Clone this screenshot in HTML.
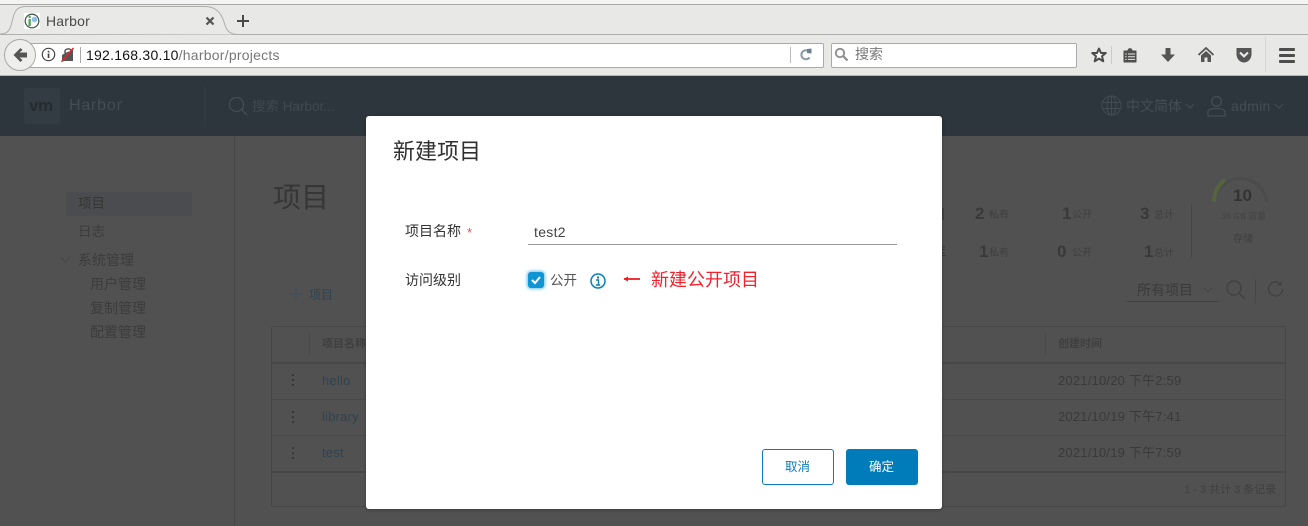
<!DOCTYPE html>
<html><head><meta charset="utf-8"><style>
html,body{margin:0;padding:0}
body{width:1308px;height:526px;overflow:hidden;position:relative;background:#515151;font-family:"Liberation Sans","WenQuanYi Zen Hei","Noto Sans CJK SC",sans-serif}
.a{position:absolute;white-space:nowrap;line-height:1}
.b{position:absolute}
.d{color:#353535}
.m{color:#2f4350}
.n{font-size:17px;color:#393939;font-weight:bold}
.l{font-size:10px;color:#3f3f3f}
</style></head><body>
<!-- browser chrome -->
<div class="b" style="left:0;top:0;width:1308px;height:76px;background:#e8e8e7"></div>
<div class="b" style="left:0;top:0;width:1308px;height:4px;background:#f4f4f2;border-bottom:1px solid #a9a9a6"></div>
<div class="b" style="left:0;top:34px;width:1308px;height:1px;background:#aeaeab"></div>
<div class="b" style="left:0;top:75px;width:1308px;height:1px;background:#b4b4b2"></div>
<svg class="b" style="left:0;top:0" width="240" height="36"><path d="M0 34C8 34 10 30 12 22C14 12 16 6.500 26 6.500H205C215 6.500 221 12 224 22C226 30 229 34.500 238 34.500" fill="#e9e9e8" stroke="#aeaeab" stroke-width="1"/></svg>
<svg class="b" style="left:24px;top:13px" width="16" height="16"><rect width="16" height="16" fill="#fff"/><circle cx="8" cy="8" r="6.800" fill="#fff" stroke="#4a5f58" stroke-width="1.300"/><rect x="4.500" y="6" width="2.300" height="7" fill="#49a84b"/><circle cx="5.600" cy="4" r="1.200" fill="#49a84b"/><circle cx="10.500" cy="6.500" r="2.800" fill="#8cc4e6"/></svg>
<div class="a" style="left:46px;top:14px;font-size:14px;color:#4a4a4a;letter-spacing:.2px">Harbor</div>
<svg class="b" style="left:205px;top:16px" width="10" height="10"><path d="M1.500 1.500L8.500 8.500M8.500 1.500L1.500 8.500" stroke="#555" stroke-width="2.200"/></svg>
<svg class="b" style="left:236px;top:14px" width="14" height="14"><path d="M7 1V13M1 7H13" stroke="#4a4a4a" stroke-width="2"/></svg>
<!-- url bar -->
<div class="b" style="left:20px;top:43px;width:802px;height:23px;background:#fff;border:1px solid #aaa;border-radius:2px"></div>
<div class="b" style="left:4px;top:39px;width:30px;height:30px;background:#eeeeed;border:1px solid #a8a8a6;border-radius:50%"></div>
<svg class="b" style="left:12px;top:47px" width="16" height="16"><path d="M8.500 1L1.500 8L8.500 15L10.500 13L7.500 10.500H15V5.500H7.500L10.500 3Z" fill="#555"/></svg>
<svg class="b" style="left:41px;top:47px" width="15" height="15"><circle cx="7.500" cy="7.500" r="6.200" fill="#fff" stroke="#444" stroke-width="1.200"/><rect x="6.700" y="6.500" width="1.700" height="4.500" fill="#444"/><rect x="6.700" y="3.800" width="1.700" height="1.700" fill="#444"/></svg>
<svg class="b" style="left:60px;top:47px" width="15" height="15"><path d="M2 14V8L5 6L13 3V14Z" fill="#555"/><path d="M5 6V4.500C5 1.500 10.500 1 11 3.500" fill="none" stroke="#555" stroke-width="1.500"/><path d="M1.500 14.800L13.500 1" stroke="#e22" stroke-width="1.500"/></svg>
<div class="b" style="left:80px;top:47px;width:1px;height:16px;background:#aaa"></div>
<div class="a" style="left:86px;top:48px;font-size:14px;color:#111;letter-spacing:.24px">192.168.30.10<span style="color:#777">/harbor/projects</span></div>
<div class="b" style="left:790px;top:47px;width:1px;height:16px;background:#bbb"></div>
<svg class="b" style="left:799px;top:47px" width="14" height="15"><path d="M10.500 10.500A4.500 4.500 0 1 1 10 4.500" fill="none" stroke="#8b9aa6" stroke-width="2"/><path d="M8 2L12.500 1.500V6.500L8 6Z" fill="#6d7f8d"/></svg>
<!-- search -->
<div class="b" style="left:831px;top:43px;width:244px;height:23px;background:#fff;border:1px solid #aaa;border-radius:2px"></div>
<svg class="b" style="left:834px;top:47px" width="15" height="15"><circle cx="6" cy="6" r="4.200" fill="none" stroke="#8b8b8b" stroke-width="1.800"/><path d="M9 9L13.500 13.500" stroke="#8b8b8b" stroke-width="2.200"/></svg>
<div class="a" style="left:855px;top:47px;font-size:14px;color:#777">搜索</div>
<!-- toolbar icons -->
<svg class="b" style="left:1090px;top:46px" width="18" height="18"><path d="M9 2.500L11 7H15.800L12 10.300L13.300 15.300L9 12.600L4.700 15.300L6 10.300L2.200 7H7Z" fill="#f4f4f4" stroke="#4d4d4d" stroke-width="2" stroke-linejoin="round"/></svg>
<div class="b" style="left:1111px;top:46px;width:1px;height:18px;background:#ccc"></div>
<svg class="b" style="left:1122px;top:47px" width="16" height="16"><path d="M2 4H5.500L7 1.800H9L10.500 4H14V15H2Z" fill="#4f4f4f" stroke="#4f4f4f" stroke-linejoin="round"/><path d="M6 7H13M6 9.700H13M6 12.400H13M3.200 7H4.700M3.200 9.700H4.700M3.200 12.400H4.700" stroke="#e8e8e7" stroke-width="1"/></svg>
<svg class="b" style="left:1160px;top:47px" width="16" height="16"><path d="M5.500 1H10.500V7.500H15L8 15L1 7.500H5.500Z" fill="#555"/></svg>
<svg class="b" style="left:1198px;top:47px" width="16" height="16"><path d="M0.500 8L8 1L15.500 8" fill="none" stroke="#555" stroke-width="1.800"/><path d="M3 8.500L8 4L13 8.500V15H9.500V10.500H6.500V15H3Z" fill="#555"/></svg>
<svg class="b" style="left:1235px;top:47px" width="18" height="16"><path d="M1.500 1H16.500V7C16.500 12 13 15.500 9 15.500C5 15.500 1.500 12 1.500 7Z" fill="#555"/><path d="M5 5.500L9 9.300L13 5.500" fill="none" stroke="#e8e8e7" stroke-width="2.200"/></svg>
<div class="b" style="left:1265px;top:37px;width:1px;height:35px;background:#d6d6d5"></div>
<div class="b" style="left:1279px;top:48px;width:16px;height:2.500px;background:#4d4d4d;border-radius:1px"></div>
<div class="b" style="left:1279px;top:54px;width:16px;height:2.500px;background:#4d4d4d;border-radius:1px"></div>
<div class="b" style="left:1279px;top:60px;width:16px;height:2.500px;background:#4d4d4d;border-radius:1px"></div>

<!-- harbor header -->
<div class="b" style="left:0;top:76px;width:1308px;height:60px;background:#2c363c"></div>
<div class="b" style="left:24px;top:88px;width:36px;height:36px;background:#333c42;border-radius:3px"></div>
<div class="a" style="left:29px;top:97px;font-size:17px;font-weight:bold;color:#252c31;letter-spacing:-.5px">vm</div>
<div class="a" style="left:69px;top:98px;font-size:16px;color:#434d53;letter-spacing:.8px">Harbor</div>
<div class="b" style="left:204px;top:86px;width:1px;height:40px;background:#323c42"></div>
<svg class="b" style="left:228px;top:96px" width="20" height="20"><circle cx="8.500" cy="8.500" r="7" fill="none" stroke="#434d53" stroke-width="1.300"/><path d="M13.500 13.500L19 19" stroke="#434d53" stroke-width="1.300"/></svg>
<div class="a" style="left:252px;top:100px;font-size:13.500px;color:#3f494f">搜索 Harbor...</div>
<svg class="b" style="left:1101px;top:95px" width="21" height="21" fill="none" stroke="#414b51"><circle cx="10.500" cy="10.500" r="9.500"/><ellipse cx="10.500" cy="10.500" rx="4.500" ry="9.500"/><path d="M1.500 7.500H19.500M1.500 13.500H19.500M10.500 1V20"/></svg>
<div class="a" style="left:1126px;top:99px;font-size:14px;color:#434d53">中文简体</div>
<svg class="b" style="left:1185px;top:103px" width="10" height="7"><path d="M1 1L5 5L9 1" fill="none" stroke="#434d53"/></svg>
<svg class="b" style="left:1206px;top:95px" width="20" height="22" fill="none" stroke="#434d53" stroke-width="1.300"><circle cx="10.500" cy="6.500" r="4.800"/><path d="M2 21V17C2 14.500 6 13.500 10.500 13.500C15 13.500 19 14.500 19 17V21Z"/></svg>
<div class="a" style="left:1231px;top:99px;font-size:14px;color:#434d53;letter-spacing:.3px">admin</div>
<svg class="b" style="left:1274px;top:103px" width="10" height="7"><path d="M1 1L5 5L9 1" fill="none" stroke="#434d53"/></svg>

<!-- sidebar -->
<div class="b" style="left:234px;top:136px;width:1px;height:390px;background:#474747"></div>
<div class="b" style="left:66px;top:192px;width:126px;height:24px;background:#4a4c4f"></div>
<div class="a d" style="left:78px;top:197px;font-size:13.500px">项目</div>
<div class="a d" style="left:78px;top:225px;font-size:13.500px;color:#3c3c3c">日志</div>
<svg class="b" style="left:60px;top:256px" width="11" height="8"><path d="M1 1L5.500 6L10 1" fill="none" stroke="#454545"/></svg>
<div class="a" style="left:78px;top:253px;font-size:14px;color:#3c3c3c">系统管理</div>
<div class="a" style="left:90px;top:277px;font-size:14px;color:#3c3c3c">用户管理</div>
<div class="a" style="left:90px;top:301px;font-size:14px;color:#3c3c3c">复制管理</div>
<div class="a" style="left:90px;top:325px;font-size:14px;color:#3c3c3c">配置管理</div>

<!-- main -->
<div class="a" style="left:273px;top:184px;font-size:28px;color:#363636">项目</div>
<svg class="b" style="left:290px;top:288px" width="12" height="12"><path d="M6 0V12M0 6H12" stroke="#3c4f5c" stroke-width="1.200"/></svg>
<div class="a m" style="left:309px;top:289px;font-size:12px">项目</div>

<div class="a" style="left:890px;top:207px;font-size:14px;color:#3a3a3a">我的项目</div>
<div class="a" style="left:890px;top:245px;font-size:14px;color:#3a3a3a">镜像仓库</div>
<div class="a n" style="left:975px;top:205px">2</div><div class="a l" style="left:989px;top:211px">私有</div>
<div class="a n" style="left:1062px;top:205px">1</div><div class="a l" style="left:1072px;top:211px">公开</div>
<div class="a n" style="left:1140px;top:205px">3</div><div class="a l" style="left:1154px;top:211px">总计</div>
<div class="a n" style="left:979px;top:243px">1</div><div class="a l" style="left:989px;top:249px">私有</div>
<div class="a n" style="left:1057px;top:243px">0</div><div class="a l" style="left:1072px;top:249px">公开</div>
<div class="a n" style="left:1144px;top:243px">1</div><div class="a l" style="left:1154px;top:249px">总计</div>
<div class="b" style="left:1191px;top:204px;width:1px;height:54px;background:#474747"></div>
<svg class="b" style="left:1208px;top:172px" width="66" height="32" fill="none"><path d="M5.500 30A27 27 0 0 1 59 30" stroke="#4b4b4b" stroke-width="3"/><path d="M5.500 30C6.500 20 10 13 17 8" stroke="#56633f" stroke-width="4"/></svg>
<div class="a" style="left:1233px;top:187px;font-size:17px;color:#333;font-weight:bold">10</div>
<div class="a" style="left:1221px;top:212px;font-size:8.500px;color:#424242;letter-spacing:.2px">36 GB 容量</div>
<div class="a" style="left:1233px;top:235px;font-size:10px;color:#3f3f3f">存储</div>

<div class="a" style="left:1137px;top:283px;font-size:14px;color:#3a3a3a">所有项目</div>
<svg class="b" style="left:1203px;top:287px" width="10" height="7"><path d="M1 1L5 5L9 1" fill="none" stroke="#454545"/></svg>
<div class="b" style="left:1127px;top:301px;width:92px;height:1px;background:#404040"></div>
<svg class="b" style="left:1226px;top:280px" width="20" height="20" fill="none" stroke="#3f3f3f" stroke-width="1.200"><circle cx="8" cy="8" r="7"/><path d="M13 13L19 19"/></svg>
<div class="b" style="left:1255px;top:279px;width:1px;height:24px;background:#474747"></div>
<svg class="b" style="left:1267px;top:281px" width="17" height="17" fill="none" stroke="#3f3f3f" stroke-width="1.100"><path d="M13.500 3A7 7 0 1 0 15.500 8.500"/><path d="M14 0.500V3.800H10.500"/></svg>

<!-- table -->
<div class="b" style="left:271px;top:326px;width:1015px;height:181px;border:1px solid #474747;border-radius:2px;box-sizing:border-box"></div>
<div class="b" style="left:272px;top:362px;width:1014px;height:2px;background:#474747"></div>
<div class="b" style="left:272px;top:399px;width:1014px;height:1px;background:#494949"></div>
<div class="b" style="left:272px;top:435px;width:1014px;height:1px;background:#494949"></div>
<div class="b" style="left:272px;top:471px;width:1014px;height:2px;background:#474747"></div>
<div class="b" style="left:309px;top:333px;width:1px;height:22px;background:#494949"></div>
<div class="b" style="left:1045px;top:333px;width:1px;height:22px;background:#494949"></div>
<div class="a" style="left:322px;top:339px;font-size:11px;font-weight:bold;color:#3f3f3f">项目名称</div>
<div class="a" style="left:1058px;top:339px;font-size:11px;font-weight:bold;color:#3f3f3f">创建时间</div>
<div class="b" style="left:292px;top:374px;width:2px;height:2px;background:#383838;box-shadow:0 5px #383838,0 10px #383838"></div>
<div class="b" style="left:292px;top:411px;width:2px;height:2px;background:#383838;box-shadow:0 5px #383838,0 10px #383838"></div>
<div class="b" style="left:292px;top:447px;width:2px;height:2px;background:#383838;box-shadow:0 5px #383838,0 10px #383838"></div>
<div class="a m" style="left:322px;top:374px;font-size:13px;letter-spacing:.2px">hello</div>
<div class="a m" style="left:322px;top:410px;font-size:13px;letter-spacing:.2px">library</div>
<div class="a m" style="left:322px;top:446px;font-size:13px;letter-spacing:.2px">test</div>
<div class="a" style="left:1058px;top:374px;font-size:13px;color:#3a3a3a;letter-spacing:.2px">2021/10/20 下午2:59</div>
<div class="a" style="left:1058px;top:410px;font-size:13px;color:#3a3a3a;letter-spacing:.2px">2021/10/19 下午7:41</div>
<div class="a" style="left:1058px;top:446px;font-size:13px;color:#3a3a3a;letter-spacing:.2px">2021/10/19 下午7:59</div>
<div class="a" style="left:1184px;top:485px;font-size:11px;color:#3f3f3f">1 - 3 共计 3 条记录</div>

<!-- modal -->
<div class="b" style="left:366px;top:116px;width:576px;height:393px;background:#fff;border-radius:3px;box-shadow:0 1px 3px rgba(0,0,0,.3)"></div>
<div class="a" style="left:393px;top:141px;font-size:22px;color:#303030;font-weight:400">新建项目</div>
<div class="a" style="left:405px;top:224px;font-size:14px;color:#333">项目名称</div>
<div class="a" style="left:467px;top:226px;font-size:13px;color:#d9534f">*</div>
<div class="a" style="left:534px;top:225px;font-size:14px;color:#444;letter-spacing:.3px">test2</div>
<div class="b" style="left:528px;top:244px;width:369px;height:1px;background:#9a9a9a"></div>
<div class="a" style="left:405px;top:273px;font-size:14px;color:#333">访问级别</div>
<div class="b" style="left:528px;top:272px;width:16px;height:16px;background:#0f95d4;border-radius:3px;box-shadow:0 0 3px 1px #6cc0e8"></div>
<svg class="b" style="left:528px;top:272px" width="16" height="16"><path d="M4 8L7 11L12 5" fill="none" stroke="#fff" stroke-width="2"/></svg>
<div class="a" style="left:550px;top:274px;font-size:13.500px;color:#555">公开</div>
<svg class="b" style="left:590px;top:273px" width="16" height="16"><circle cx="8" cy="8" r="7" fill="#fff" stroke="#0a7fbd" stroke-width="1.500"/><path d="M6 7H8.500V12M5.800 12H10.200" fill="none" stroke="#0a7fbd" stroke-width="1.400"/><rect x="7" y="3.500" width="2" height="2" fill="#0a7fbd"/></svg>
<svg class="b" style="left:623px;top:273px" width="18" height="12"><path d="M1 6H17" stroke="#f01c24" stroke-width="1.800"/><path d="M0.500 6L5 3.500V8.500Z" fill="#f01c24"/></svg>
<div class="a" style="left:651px;top:271px;font-size:18px;color:#f4202a">新建公开项目</div>
<div class="b" style="left:762px;top:449px;width:72px;height:36px;box-sizing:border-box;border:1px solid #0a7cb9;border-radius:3px;background:#fff"></div>
<div class="a" style="left:785px;top:461px;font-size:12.500px;color:#0a7cb9">取消</div>
<div class="b" style="left:846px;top:449px;width:72px;height:36px;background:#007cbb;border-radius:3px"></div>
<div class="a" style="left:869px;top:461px;font-size:12.500px;color:#fff">确定</div>
</body></html>
